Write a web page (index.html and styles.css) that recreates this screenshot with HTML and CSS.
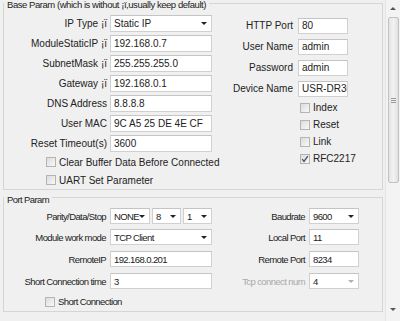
FILE: index.html
```html
<!DOCTYPE html>
<html lang="en">
<head>
  <meta charset="UTF-8" />
  <title>Base Param</title>
  <link rel="stylesheet" href="styles.css">
</head>
<body>
  <div class="window">
    <div class="content">
      <!-- Base parameters -->
      <fieldset class="group base">
        <legend>Base Param (which is without ¡ï,usually keep default)</legend>
        <div class="base-cols">
          <div class="col-left">
            <div class="row-l"><label>IP Type ¡ï</label><div class="field select">Static IP<span class="arrow"></span></div></div>
            <div class="row-l"><label>ModuleStaticIP ¡ï</label><div class="field">192.168.0.7</div></div>
            <div class="row-l"><label>SubnetMask ¡ï</label><div class="field">255.255.255.0</div></div>
            <div class="row-l"><label>Gateway ¡ï</label><div class="field">192.168.0.1</div></div>
            <div class="row-l"><label>DNS Address</label><div class="field">8.8.8.8</div></div>
            <div class="row-l"><label>User MAC</label><div class="field">9C A5 25 DE 4E CF</div></div>
            <div class="row-l"><label>Reset Timeout(s)</label><div class="field">3600</div></div>
            <div class="check check-l"><span class="box"></span>Clear Buffer Data Before Connected</div>
            <div class="check check-l"><span class="box"></span>UART Set Parameter</div>
          </div>
          <div class="col-right">
            <div class="row-r"><label>HTTP Port</label><div class="field">80</div></div>
            <div class="row-r"><label>User Name</label><div class="field">admin</div></div>
            <div class="row-r"><label>Password</label><div class="field">admin</div></div>
            <div class="row-r"><label>Device Name</label><div class="field">USR-DR30</div></div>
            <div class="check check-r"><span class="box"></span>Index</div>
            <div class="check check-r"><span class="box"></span>Reset</div>
            <div class="check check-r"><span class="box"></span>Link</div>
            <div class="check check-r">
              <span class="box"><svg width="8" height="8" viewBox="0 0 8 8"><path d="M1.2 4.2 L3 6.4 L6.8 1.2" fill="none" stroke="#4a4a6a" stroke-width="1.3"/></svg></span>RFC2217
            </div>
          </div>
        </div>
      </fieldset>

      <!-- Port parameters -->
      <fieldset class="group port">
        <legend>Port Param</legend>
        <div class="port-row first">
          <label>Parity/Data/Stop</label>
          <div class="triple">
            <div class="field select s-none">NONE<span class="arrow"></span></div>
            <div class="field select s-small">8<span class="arrow"></span></div>
            <div class="field select s-small">1<span class="arrow"></span></div>
          </div>
          <label>Baudrate</label>
          <div class="field select">9600<span class="arrow"></span></div>
        </div>
        <div class="port-row">
          <label>Module work mode</label>
          <div class="field select">TCP Client<span class="arrow"></span></div>
          <label>Local Port</label>
          <div class="field">11</div>
        </div>
        <div class="port-row">
          <label>RemoteIP</label>
          <div class="field">192.168.0.201</div>
          <label>Remote Port</label>
          <div class="field">8234</div>
        </div>
        <div class="port-row">
          <label>Short Connection time</label>
          <div class="field">3</div>
          <label class="disabled">Tcp connect num</label>
          <div class="field select disabled">4<span class="arrow"></span></div>
        </div>
        <div class="check check-port"><span class="box"></span>Short Connection</div>
      </fieldset>
    </div>

    <!-- Vertical scrollbar -->
    <div class="scrollbar">
      <div class="sb-btn"><span class="tri-up"></span></div>
      <div class="thumb"><span class="grip"></span></div>
      <div class="sb-space"></div>
      <div class="sb-btn"><span class="tri-down"></span></div>
    </div>
  </div>
</body>
</html>
```

FILE: styles.css
```css
/* Reset & Global Styles */
html, body {
  margin: 0;
  padding: 0;
}
body {
  background-color: #f0f0f0;
  color: #222;
  font-family: "Liberation Sans", Arial, sans-serif;
  font-size: 10px;
}
.window {
  width: 400px;
  height: 321px;
  display: flex;
  overflow: hidden;
}
.content {
  flex: 1;
  min-width: 0;
  padding: 0 2px 0 3px;
}
/* Group boxes */
.group {
  margin: 0;
  padding: 0;
  min-width: 0;
  border: 1px solid #d5d5d5;
}
.group legend {
  padding: 4px 3px 0;
  line-height: 12px;
}
.base {
  margin-top: -5px;
}
.base legend {
  font-size: 9.5px;
  letter-spacing: -0.45px;
}
.port {
  margin-top: -2px;
  font-size: 9.5px;
  letter-spacing: -0.6px;
}
.port legend {
  padding-top: 6px;
}
/* Base section columns */
.base-cols {
  display: flex;
}
.col-left {
  width: 208px;
  padding-top: 2px;
}
.col-right {
  flex: 1;
  padding-top: 4px;
}
.row-l, .row-r {
  display: flex;
  align-items: center;
}
.row-l {
  height: 20px;
  gap: 3px;
}
.row-l label {
  width: 103px;
  text-align: right;
  white-space: nowrap;
}
.row-l .field {
  width: 102px;
  height: 17px;
}
.row-r {
  height: 21px;
  gap: 5px;
}
.row-r label {
  width: 81px;
  text-align: right;
  white-space: nowrap;
}
.row-r .field {
  width: 50px;
  height: 16px;
}
/* Inputs & selects */
.field {
  box-sizing: border-box;
  display: flex;
  align-items: center;
  padding: 0 3px;
  background: #fff;
  border: 1px solid #d0d0d0;
  border-top-color: #c4c4c4;
  white-space: nowrap;
  overflow: hidden;
  height: 16px;
}
.select .arrow {
  flex-shrink: 0;
  margin-left: auto;
  width: 0;
  height: 0;
  border-left: 3px solid transparent;
  border-right: 3px solid transparent;
  border-top: 3px solid #222;
  margin-right: 1px;
}
.field.disabled .arrow {
  border-top-color: #b0b0b0;
}
/* Checkboxes */
.check {
  display: flex;
  align-items: center;
  gap: 3px;
  white-space: nowrap;
}
.check-l {
  height: 18px;
  padding-left: 42px;
}
.check-r {
  height: 17px;
  padding-left: 88px;
}
.check-port {
  height: 19px;
  padding-left: 41px;
}
.box {
  flex-shrink: 0;
  box-sizing: border-box;
  width: 10px;
  height: 10px;
  border: 1px solid #b4b4b4;
  background: linear-gradient(135deg, #dcdcdc, #f8f8f8);
  display: flex;
  align-items: center;
  justify-content: center;
}
/* Port section rows */
.port-row {
  display: grid;
  grid-template-columns: 102px 102px 89px 50px;
  column-gap: 4px;
  align-items: center;
  height: 22px;
}
.port-row.first {
  height: 20px;
}
.port-row label {
  text-align: right;
  white-space: nowrap;
}
.port-row label.disabled {
  color: #a9a9a9;
}
.triple {
  display: flex;
  gap: 2px;
}
.s-none {
  width: 40px;
}
.s-small {
  flex: 1;
}
/* Scrollbar */
.scrollbar {
  width: 14px;
  display: flex;
  flex-direction: column;
  align-items: center;
  border-left: 1px solid #e4e4e4;
  background: #f3f3f3;
}
.sb-btn {
  height: 16px;
  display: flex;
  align-items: center;
  justify-content: center;
}
.tri-up, .tri-down {
  width: 0;
  height: 0;
  border-left: 3px solid transparent;
  border-right: 3px solid transparent;
}
.tri-up {
  border-bottom: 3px solid #555;
}
.tri-down {
  border-top: 3px solid #555;
}
.thumb {
  box-sizing: border-box;
  width: 11px;
  height: 166px;
  margin-top: 1px;
  border: 1px solid #c2c2c2;
  border-radius: 2px;
  background: linear-gradient(90deg, #e4e4e4, #f2f2f2 50%, #e0e0e0);
  display: flex;
  align-items: center;
  justify-content: center;
}
.grip {
  width: 5px;
  height: 5px;
  background: repeating-linear-gradient(#999 0 1px, transparent 1px 2px);
}
.sb-space {
  flex: 1;
}
.sb-btn:last-child {
  margin-bottom: 4px;
}
```
